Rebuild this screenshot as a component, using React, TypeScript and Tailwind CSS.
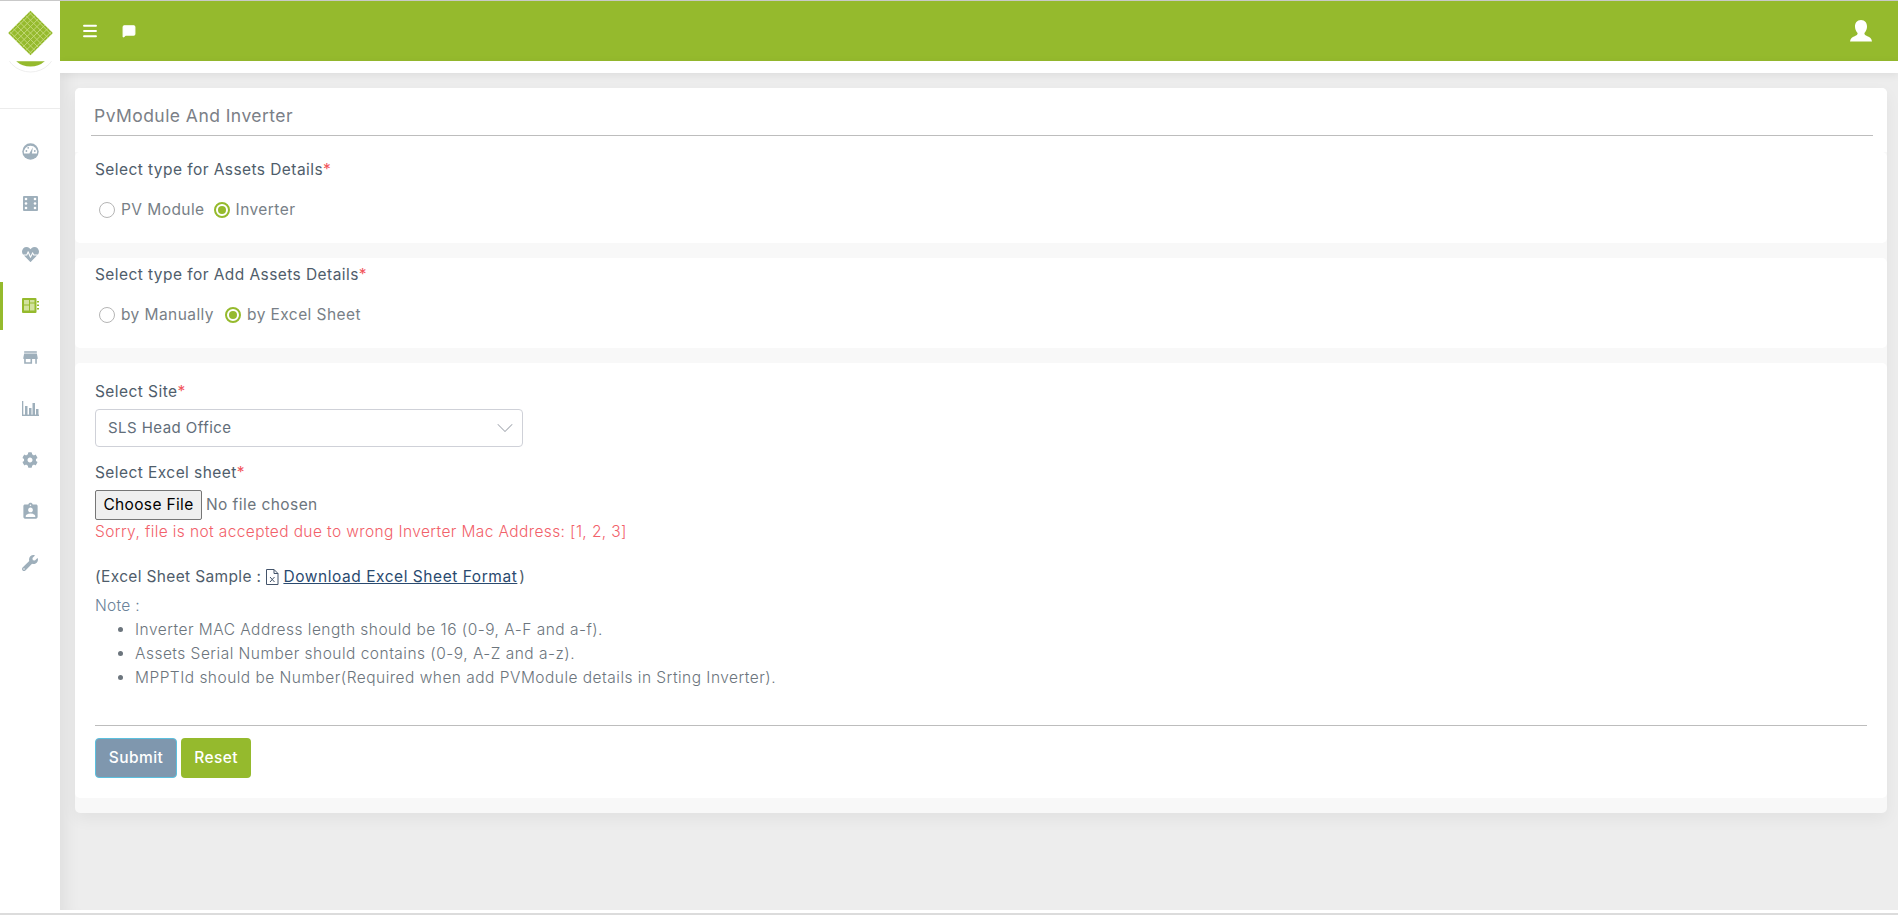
import { useState } from "react";
import { ChevronDown, Menu, MessageSquare } from "lucide-react";
import { FaCog, FaHeartbeat, FaWrench } from "react-icons/fa";
import { MdAssignmentInd, MdStore } from "react-icons/md";

const green = "#95ba2d";

function Logo() {
  const lines = [-3, -2, -1, 0, 1, 2, 3];
  return (
    <svg width="60" height="72" viewBox="0 0 60 73">
      <circle cx="30.5" cy="45.5" r="26.5" fill="#fff" stroke="#eeeeee" />
      <rect x="0" y="0" width="60" height="61" fill="#fff" />
      <path d="M16 61 H45 A22 22 0 0 1 16 61 Z" fill={green} />
      <g transform="rotate(45 30.5 32.5)">
        <rect x="14.5" y="16.5" width="32" height="32" fill={green} />
        {lines.map((l) => (
          <g key={l} stroke="#c6da7c" strokeWidth="0.9">
            <line x1={30.5 + l * 4.6} y1="16.5" x2={30.5 + l * 4.6} y2="48.5" />
            <line x1="14.5" y1={32.5 + l * 4.6} x2="46.5" y2={32.5 + l * 4.6} />
          </g>
        ))}
      </g>
    </svg>
  );
}

function GaugeIcon() {
  return (
    <svg width="17" height="17" viewBox="0 0 17 17">
      <circle cx="8.5" cy="8.5" r="8.2" fill="currentColor" />
      <path d="M2 10.5 A6.6 6.6 0 1 1 15 10.5 Z" fill="#fff" />
      <circle cx="4.4" cy="8" r=".9" fill="currentColor" />
      <circle cx="6.2" cy="4.8" r=".9" fill="currentColor" />
      <circle cx="12.8" cy="8" r=".9" fill="currentColor" />
      <path d="M7.2 10.8 L10.9 4.2 L9.8 11.2 Z" fill="currentColor" />
    </svg>
  );
}

function GridIcon() {
  return (
    <svg width="15" height="15" viewBox="0 0 15 15">
      <rect width="15" height="15" rx="1" fill="currentColor" />
      {[3, 7.5, 12].map((y) =>
        [3, 12].map((x) => <circle key={`${x}-${y}`} cx={x} cy={y} r="1.3" fill="#fff" />),
      )}
    </svg>
  );
}

function ChipIcon() {
  return (
    <svg width="17" height="15" viewBox="0 0 17 15">
      <rect width="14.5" height="15" rx="1" fill={green} />
      <rect x="2" y="2" width="5" height="4.5" fill="#d3e2a0" />
      <rect x="8" y="2" width="4.5" height="2.5" fill="#d3e2a0" />
      <rect x="8" y="5.5" width="4.5" height="7" fill="#d3e2a0" />
      <rect x="2" y="7.5" width="5" height="5" fill="#d3e2a0" />
      <rect x="15" y="3" width="2" height="1.5" fill={green} />
      <rect x="15" y="6.5" width="2" height="1.5" fill={green} />
      <rect x="15" y="10" width="2" height="1.5" fill={green} />
    </svg>
  );
}

function BarsIcon() {
  return (
    <svg width="17" height="15" viewBox="0 0 17 15" fill="currentColor">
      <rect x="0" y="0" width="1.3" height="15" />
      <rect x="0" y="13.6" width="17" height="1.4" />
      <rect x="3" y="5" width="2.5" height="9" />
      <rect x="7" y="7" width="2.5" height="7" />
      <rect x="10.5" y="2" width="2.5" height="12" />
      <rect x="14" y="8" width="2.5" height="6" />
    </svg>
  );
}

function UserIcon() {
  return (
    <svg width="22" height="22" viewBox="0 0 22 22" fill="#fff" className="ml-auto">
      <path d="M11 0 C15 0 17.2 3 17 7 C16.8 10 15.6 11.6 14.4 13 C14.2 14.6 15.4 15.4 17.4 16.2 C19.8 17.2 21.6 18.4 22 21.5 H0 C.4 18.4 2.2 17.2 4.6 16.2 C6.6 15.4 7.8 14.6 7.6 13 C6.4 11.6 5.2 10 5 7 C4.8 3 7 0 11 0 Z" />
    </svg>
  );
}

const navItems = [
  { id: "dash", icon: <GaugeIcon /> },
  { id: "grid", icon: <GridIcon /> },
  { id: "health", icon: <FaHeartbeat size={17} /> },
  { id: "assets", icon: <ChipIcon />, active: true },
  { id: "store", icon: <MdStore size={19} /> },
  { id: "bars", icon: <BarsIcon /> },
  { id: "settings", icon: <FaCog size={16} /> },
  { id: "clipboard", icon: <MdAssignmentInd size={19} /> },
  { id: "wrench", icon: <FaWrench size={16} /> },
];

function Radio({
  label,
  checked,
  onSelect,
}: {
  label: string;
  checked: boolean;
  onSelect: () => void;
}) {
  return (
    <label className="flex cursor-pointer items-center" onClick={onSelect}>
      <span
        className={`grid h-[16px] w-[16px] place-items-center rounded-full border bg-white ${
          checked ? "border-[2px] border-[#95ba2d]" : "border-[#b5b5b5]"
        }`}
      >
        {checked && <span className="h-2 w-2 rounded-full bg-[#95ba2d]" />}
      </span>
      <span className="ml-[6px] text-[15.5px] leading-[22px] tracking-[0.43px] text-[#787f87]">
        {label}
      </span>
    </label>
  );
}

function Label({ text }: { text: string }) {
  return (
    <div className="text-[15.5px] leading-[22px] tracking-[0.43px] text-[#4f5d6b]">
      {text}
      <span className="text-[#f2545b]">*</span>
    </div>
  );
}

export default function App() {
  const [assetType, setAssetType] = useState("inverter");
  const [addType, setAddType] = useState("excel");

  return (
    <div className="flex h-[916px] w-[1898px] flex-col overflow-hidden bg-white font-['Inter',sans-serif]">
      <div className="h-px bg-[#c9c9c9]" />
      <div className="flex h-[909px]">
        <aside className="z-10 flex w-[60px] shrink-0 flex-col bg-white">
          <div className="h-[108px] border-b border-[#ececec]">
            <Logo />
          </div>
          <nav className="flex flex-col pt-[17px] text-[#9eafbb]">
            {navItems.map((item) => (
              <div key={item.id} className="relative grid h-[51.4px] place-items-center">
                {item.active && (
                  <span className="absolute top-[2px] left-0 h-[48px] w-[3px] bg-[#95ba2d]" />
                )}
                {item.icon}
              </div>
            ))}
          </nav>
        </aside>

        <div className="flex min-w-0 flex-1 flex-col bg-[#ededed] shadow-[inset_18px_0_16px_-12px_rgba(0,0,0,0.06)]">
          <header className="flex h-[60px] shrink-0 items-center bg-[#95ba2d] pr-[26px] pl-[21px] text-white">
            <Menu size={18} strokeWidth={2.5} />
            <MessageSquare size={14} fill="#fff" className="ml-[23px]" />
            <UserIcon />
          </header>
          <div className="h-[12px] shrink-0 bg-white shadow-[0_2px_8px_rgba(0,0,0,0.07)]" />

          <main className="mt-[15px] mr-[11px] ml-[15px]">
            <section className="overflow-hidden rounded-[5px] bg-[#f8f8f8] shadow-[0_6px_16px_rgba(0,0,0,0.05)]">
              <div className="h-[64px] bg-white pr-[14px] pl-[16px]">
                <h1 className="h-[48px] border-b border-[#bdbdbd] pt-[16px] pl-[3px] text-[17.5px] leading-[24px] tracking-[0.45px] text-[#7b8087]">
                  PvModule And Inverter
                </h1>
              </div>

              <div className="h-[91px] rounded-[5px] bg-white pt-[7px] pl-[20px]">
                <Label text="Select type for Assets Details" />
                <div className="mt-[18px] flex gap-[9px] pl-[4px]">
                  <Radio label="PV Module" checked={assetType === "pv"} onSelect={() => setAssetType("pv")} />
                  <Radio label="Inverter" checked={assetType === "inverter"} onSelect={() => setAssetType("inverter")} />
                </div>
              </div>

              <div className="mt-[15px] h-[90px] rounded-[5px] bg-white pt-[6px] pl-[20px]">
                <Label text="Select type for Add Assets Details" />
                <div className="mt-[18px] flex gap-[11px] pl-[4px]">
                  <Radio label="by Manually" checked={addType === "manual"} onSelect={() => setAddType("manual")} />
                  <Radio label="by Excel Sheet" checked={addType === "excel"} onSelect={() => setAddType("excel")} />
                </div>
              </div>

              <form className="mt-[15px] rounded-[5px] bg-white px-[20px] pt-[18px] pb-[20px]" onSubmit={(e) => e.preventDefault()}>
                <Label text="Select Site" />
                <div className="relative mt-[6px] w-[428px]">
                  <select className="h-[38px] w-full appearance-none rounded-[4px] border border-[#cfd1d8] bg-white pl-[12px] text-[15px] tracking-[0.45px] text-[#626e7a] outline-none">
                    <option>SLS Head Office</option>
                  </select>
                  <ChevronDown size={28} strokeWidth={0.9} className="absolute top-[5px] right-[4px] text-[#a9adb5]" />
                </div>

                <div className="mt-[15px]">
                  <Label text="Select Excel sheet" />
                </div>
                <input
                  type="file"
                  className="mt-[6px] block h-[30px] w-[400px] text-[15.5px] tracking-[0.43px] text-[#6c757d] file:mr-[4px] file:h-[30px] file:w-[107px] file:rounded-[2px] file:border file:border-[#767676] file:bg-[#efefef] file:text-[15.5px] file:font-normal file:tracking-[0.35px] file:text-black"
                />
                <div className="mt-px text-[15.5px] leading-[22px] font-light tracking-[0.39px] text-[#f2616a]">
                  Sorry, file is not accepted due to wrong Inverter Mac Address: [1, 2, 3]
                </div>

                <div className="mt-[23px] flex h-[22px] items-center text-[15.5px] tracking-[0.35px] text-[#4f5d6b]">
                  (Excel Sheet Sample :
                  <svg width="14" height="16" viewBox="0 0 14 16" fill="none" stroke="#44546a" strokeWidth="1" className="mr-[4px] ml-[4px]">
                    <path d="M1.5 .5 H9 L13 4.5 V15.5 H1.5 Z M9 .5 V4.5 H13 M5 8 L9.5 13 M9.5 8 L5 13" />
                  </svg>
                  <a href="#" className="tracking-[0.55px] text-[#2a4a6f] underline">
                    Download Excel Sheet Format
                  </a>
                  <span className="ml-[2px]">)</span>
                </div>

                <div className="mt-[7px] text-[15.5px] leading-[22px] font-light tracking-[0.3px] text-[#6b8299]">Note :</div>
                <ul className="mt-[1px] list-disc pl-[40px] text-[15.5px] leading-[24px] font-light tracking-[0.48px] text-[#6c757d]">
                  <li>Inverter MAC Address length should be 16 (0-9, A-F and a-f).</li>
                  <li>Assets Serial Number should contains (0-9, A-Z and a-z).</li>
                  <li>MPPTId should be Number(Required when add PVModule details in Srting Inverter).</li>
                </ul>

                <div className="mt-[35px] border-t border-[#bdbdbd] pt-[12px]">
                  <div className="flex gap-[4px]">
                    <button type="submit" className="h-[40px] w-[82px] rounded-[4px] border border-[#5bc0de] bg-[#7f97ae] text-[15.5px] font-medium tracking-[0.4px] text-white">
                      Submit
                    </button>
                    <button type="reset" className="h-[40px] w-[70px] rounded-[4px] bg-[#95ba2d] text-[15.5px] font-medium tracking-[0.4px] text-white">
                      Reset
                    </button>
                  </div>
                </div>
              </form>

              <div className="h-[15px]" />
            </section>
          </main>
        </div>
      </div>
      <div className="h-[3px] bg-white" />
      <div className="h-[2px] bg-[#dcdcdc]" />
    </div>
  );
}
